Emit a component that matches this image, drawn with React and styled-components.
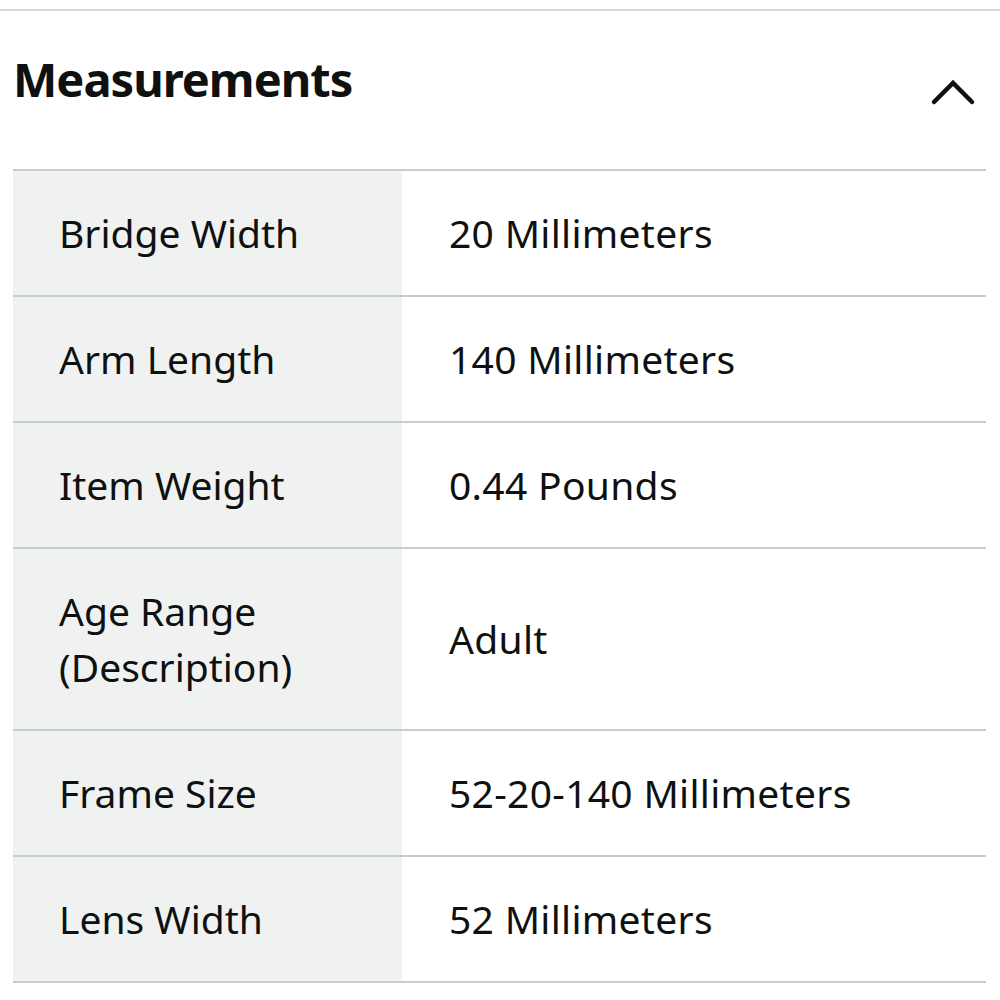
import React from "react";
import styled, { createGlobalStyle } from "styled-components";

const GlobalStyle = createGlobalStyle`
  html, body {
    margin: 0;
    padding: 0;
    background: #ffffff;
  }
  body {
    font-family: "Noto Sans", "Liberation Sans", sans-serif;
    color: #0f1111;
  }
`;

const Section = styled.section`
  width: 1000px;
  padding-top: 9px;
`;

const TopRule = styled.div`
  height: 2px;
  background: #d5d9d9;
`;

const Header = styled.div`
  display: flex;
  align-items: center;
  justify-content: space-between;
  padding: 0 24px 0 13px;
  height: 158px;
`;

const Title = styled.h2`
  margin: 0;
  margin-top: -22px;
  font-size: 47px;
  font-weight: 700;
  letter-spacing: -1px;
  color: #0f1111;
`;

const Chevron = styled.svg`
  width: 46px;
  height: 28px;
  margin-top: 4px;
`;

const Table = styled.div`
  margin: 0 14px 0 13px;
  border-top: 2px solid #c9cccc;
`;

const Row = styled.div`
  display: grid;
  grid-template-columns: 389px 1fr;
  border-bottom: 2px solid #c9cccc;
`;

const Label = styled.div`
  background: #f0f2f2;
  padding: 34px 20px 34px 46px;
  font-size: 39px;
  line-height: 56px;
`;

const Value = styled.div`
  display: flex;
  align-items: center;
  padding: 34px 20px 34px 47px;
  font-size: 39px;
  line-height: 56px;
  letter-spacing: 0.3px;
`;

const rows = [
  ["Bridge Width", "20 Millimeters"],
  ["Arm Length", "140 Millimeters"],
  ["Item Weight", "0.44 Pounds"],
  ["Age Range (Description)", "Adult"],
  ["Frame Size", "52-20-140 Millimeters"],
  ["Lens Width", "52 Millimeters"],
];

export default function App() {
  return (
    <>
      <GlobalStyle />
      <Section>
        <TopRule />
        <Header>
          <Title>Measurements</Title>
          <Chevron viewBox="0 0 46 28" fill="none">
            <path
              d="M4 24 L23 5 L42 24"
              stroke="#0f1111"
              strokeWidth="4.5"
              strokeLinecap="round"
              strokeLinejoin="miter"
            />
          </Chevron>
        </Header>
        <Table>
          {rows.map(([label, value]) => (
            <Row key={label}>
              <Label>
                {label === "Age Range (Description)" ? (
                  <>
                    Age Range
                    <br />
                    (Description)
                  </>
                ) : (
                  label
                )}
              </Label>
              <Value>{value}</Value>
            </Row>
          ))}
        </Table>
      </Section>
    </>
  );
}
